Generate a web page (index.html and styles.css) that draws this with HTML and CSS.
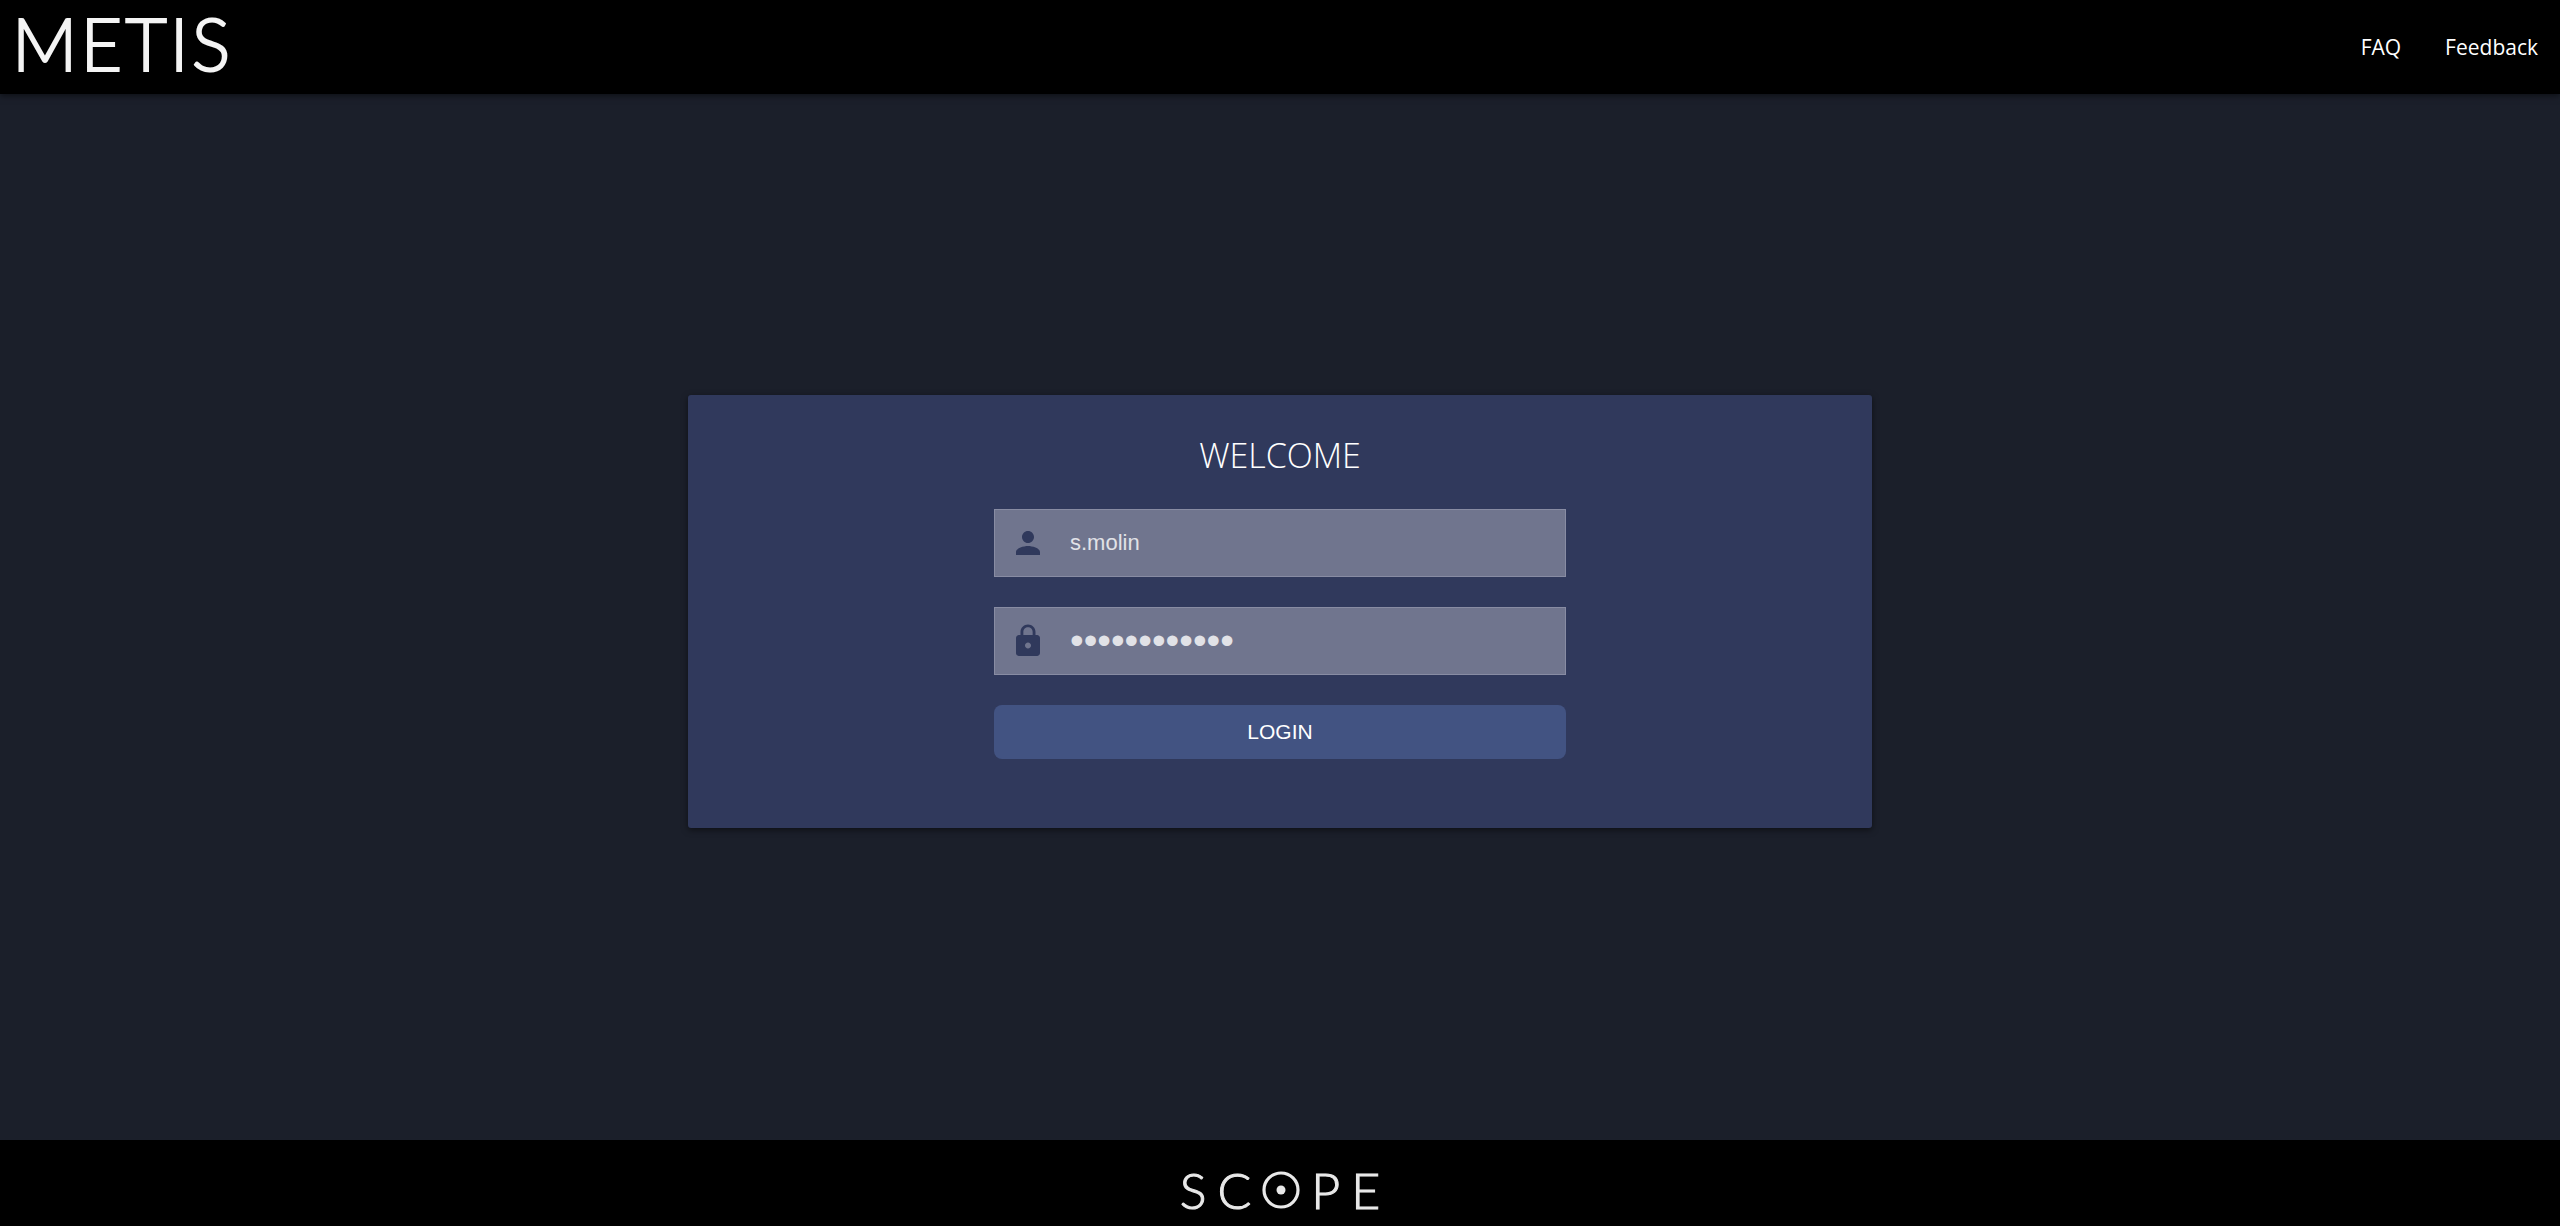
FILE: index.html
```html
<!DOCTYPE html>
<html lang="en">
<head>
<meta charset="utf-8">
<meta name="viewport" content="width=device-width, initial-scale=1">
<title>METIS</title>
<link rel="stylesheet" href="styles.css">
</head>
<body>
<header class="topbar">
  <a class="metis" href="#" aria-label="METIS"><span>M</span><span>E</span><span>T</span><span>I</span><span>S</span></a>
  <nav class="links">
    <a href="#">FAQ</a>
    <a href="#">Feedback</a>
  </nav>
</header>
<main class="main">
  <section class="card">
    <form class="login">
      <h1 class="title">WELCOME</h1>
      <label class="field">
        <svg class="icon" viewBox="0 0 24 24" aria-hidden="true"><path d="M12 12c2.210 0 4-1.790 4-4s-1.790-4-4-4-4 1.790-4 4 1.790 4 4 4zm0 2c-2.670 0-8 1.340-8 4v2h16v-2c0-2.660-5.330-4-8-4z"/></svg>
        <input class="input" type="text" value="s.molin" aria-label="Username">
      </label>
      <label class="field">
        <svg class="icon" viewBox="0 0 24 24" aria-hidden="true"><path d="M18 8h-1V6c0-2.760-2.240-5-5-5S7 3.240 7 6v2H6c-1.100 0-2 .9-2 2v10c0 1.100.9 2 2 2h12c1.100 0 2-.9 2-2V10c0-1.100-.9-2-2-2zm-6 9c-1.100 0-2-.9-2-2s.9-2 2-2 2 .9 2 2-.9 2-2 2zm3.100-9H8.900V6c0-1.710 1.390-3.100 3.100-3.100s3.100 1.390 3.100 3.100v2z"/></svg>
        <input class="input password" type="password" value="metisaccess1" aria-label="Password">
      </label>
      <button class="submit" type="button">LOGIN</button>
    </form>
  </section>
</main>
<footer class="footer">
  <div class="scope" role="img" aria-label="SCOPE">
    <span>S</span><span>C</span>
    <svg class="ring" viewBox="0 0 38 38"><circle cx="19" cy="19" r="17" fill="none" stroke="currentColor" stroke-width="3.200"/><circle cx="19" cy="19" r="4.500" fill="currentColor"/></svg>
    <span>P</span><span>E</span>
  </div>
</footer>
</body>
</html>
```
FILE: styles.css
```css
* { box-sizing: border-box; }

body {
  margin: 0;
  min-height: 100vh;
  display: flex;
  flex-direction: column;
  background: #1b1f2a;
  color: #fff;
  font-family: "Open Sans", "Noto Sans", sans-serif;
}

.topbar {
  display: flex;
  align-items: center;
  justify-content: space-between;
  height: 94px;
  padding: 0 22px 0 12px;
  background: #000;
  box-shadow: 0 2px 6px rgba(0, 0, 0, 0.5);
}

.metis {
  display: flex;
  gap: 3px;
  padding-bottom: 8px;
  color: #f4f4f4;
  font-family: Lato, sans-serif;
  font-size: 72px;
  font-weight: 300;
  line-height: 86px;
  text-decoration: none;
  -webkit-text-stroke: 2px #f4f4f4;
}

.links {
  display: flex;
  gap: 44px;
  font-size: 21px;
  line-height: 32px;
}

.links a {
  color: #fff;
  text-decoration: none;
}

.main {
  flex: 1;
  display: flex;
  align-items: center;
  justify-content: center;
  padding: 0 24px 11px;
}

.card {
  width: 100%;
  max-width: 1184px;
  padding: 37px 24px 69px;
  border-radius: 3px;
  background: #30395c;
  box-shadow: 0 2px 6px rgba(0, 0, 0, 0.5);
}

.login {
  display: flex;
  flex-direction: column;
  gap: 30px;
  max-width: 572px;
  margin: 0 auto;
}

.title {
  margin: 0;
  font-size: 34px;
  font-weight: 300;
  line-height: 47px;
  text-align: center;
}

.field {
  display: flex;
  align-items: center;
  gap: 24px;
  height: 68px;
  padding: 0 15px;
  border: 1px solid #888ca3;
  background: #70758e;
}

.icon {
  flex: none;
  width: 36px;
  height: 36px;
  fill: #30395c;
}

.input {
  flex: 1;
  min-width: 0;
  height: 100%;
  padding: 0;
  border: 0;
  outline: 0;
  background: transparent;
  color: #e1e2e7;
  font-family: "Liberation Sans", Arial, sans-serif;
  font-size: 22px;
}

.password {
  font-size: 39px;
}

.submit {
  height: 54px;
  border: 0;
  border-radius: 8px;
  background: #425382;
  color: #fff;
  font-family: "Liberation Sans", Arial, sans-serif;
  font-size: 21px;
}

.footer {
  display: flex;
  justify-content: center;
  height: 86px;
  padding-top: 20px;
  background: #000;
}

.scope {
  display: flex;
  align-items: center;
  gap: 11px;
  height: 60px;
  color: #e8e8e8;
  font-family: Lato, sans-serif;
  font-size: 50px;
  font-weight: 300;
  line-height: 60px;
  -webkit-text-stroke: 1px #e8e8e8;
}

.ring {
  width: 38px;
  height: 38px;
}
```
